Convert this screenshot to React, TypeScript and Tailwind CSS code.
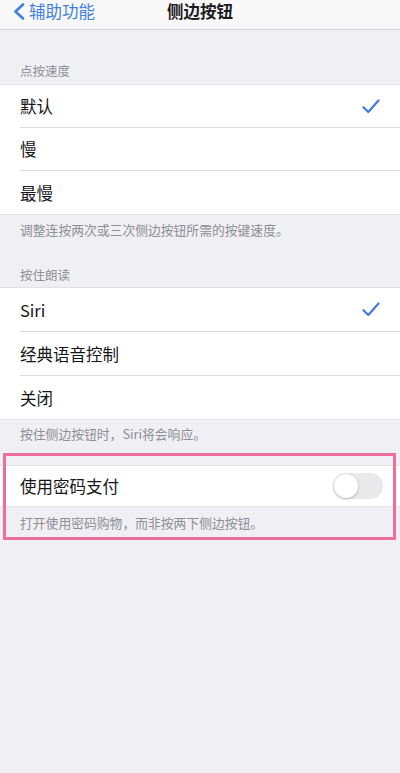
import React from "react";

const font = { fontFamily: '"Noto Sans CJK SC", "Noto Sans", sans-serif' };

const Check = () => (
   <svg width="18" height="15" viewBox="0 0 18 15" fill="none">
      <path
         d="M1.5 8.2 L6.3 13 L16.5 1.5"
         stroke="#3d7be0"
         strokeWidth="2.2"
         strokeLinecap="round"
         strokeLinejoin="round"
      />
   </svg>
);

const Row = ({
   label,
   checked,
   last,
   h,
}: {
   label: string;
   checked?: boolean;
   last?: boolean;
   h: string;
}) => (
   <div className={`flex items-stretch pl-[20px] bg-white ${h}`}>
      <div
         className={`flex flex-1 items-center justify-between pr-[20px] ${
            last ? "" : "border-b border-[#dcdce0]"
         }`}
      >
         <span className="text-[16.5px] leading-[22px] text-[#161618]">{label}</span>
         {checked && <Check />}
      </div>
   </div>
);

const App = () => {
   return (
      <div className="min-h-[773px] w-[400px] bg-[#efeff4]" style={font}>
         {/* nav bar */}
         <div className="grid h-[30px] grid-cols-[1fr_auto_1fr] border-b border-[#d4d4d8] bg-[#f8f8f9]">
            <div className="flex h-[22px] items-center pl-[13px]">
               <svg width="12" height="17" viewBox="0 0 12 17" fill="none">
                  <path
                     d="M10 1.5 L2.5 8.5 L10 15.5"
                     stroke="#3f80e0"
                     strokeWidth="2.6"
                     strokeLinecap="round"
                     strokeLinejoin="round"
                  />
               </svg>
               <span className="ml-[4px] text-[16.5px] leading-[22px] text-[#3f80e0]">辅助功能</span>
            </div>
            <div className="text-[16.5px] font-bold leading-[22px] text-[#1c1c1e]">侧边按钮</div>
            <div />
         </div>

         {/* 点按速度 */}
         <div className="pt-[32px] pb-[4px] pl-[20px] text-[12.5px] leading-[18px] text-[#8e8e93]">
            点按速度
         </div>
         <div className="border-y border-[#e2e2e6]">
            <Row label="默认" checked h="h-[43px]" />
            <Row label="慢" h="h-[43px]" />
            <Row label="最慢" last h="h-[43px]" />
         </div>
         <div className="pt-[6px] pl-[20px] text-[12.8px] leading-[18px] text-[#8e8e93]">
            调整连按两次或三次侧边按钮所需的按键速度。
         </div>

         {/* 按住朗读 */}
         <div className="pt-[27px] pb-[3px] pl-[20px] text-[12.5px] leading-[18px] text-[#8e8e93]">
            按住朗读
         </div>
         <div className="border-y border-[#e2e2e6]">
            <Row label="Siri" checked h="h-[44px]" />
            <Row label="经典语音控制" h="h-[44px]" />
            <Row label="关闭" last h="h-[43px]" />
         </div>
         <div className="pt-[5px] pl-[20px] text-[12.8px] leading-[18px] text-[#8e8e93]">
            按住侧边按钮时，Siri将会响应。
         </div>

         {/* 使用密码支付 */}
         <div className="relative pt-[22px]">
            <div className="flex h-[42px] items-center justify-between border-y border-[#e2e2e6] bg-white pl-[20px] pr-[17px]">
               <span className="text-[16.5px] leading-[22px] text-[#161618]">使用密码支付</span>
               <div className="flex h-[26px] w-[50px] items-center rounded-full bg-[#e9e9eb] p-[1px]">
                  <div className="h-[24px] w-[24px] rounded-full bg-white shadow-[0_1px_3px_rgba(0,0,0,0.25)]" />
               </div>
            </div>
            <div className="pt-[7px] pb-[8px] pl-[20px] text-[12.8px] leading-[18px] text-[#8e8e93]">
               打开使用密码购物，而非按两下侧边按钮。
            </div>
            <div className="absolute top-[10px] right-[4px] bottom-0 left-[3px] border-[3px] border-[#ee6e9a]" />
         </div>
      </div>
   );
};

export default App;
